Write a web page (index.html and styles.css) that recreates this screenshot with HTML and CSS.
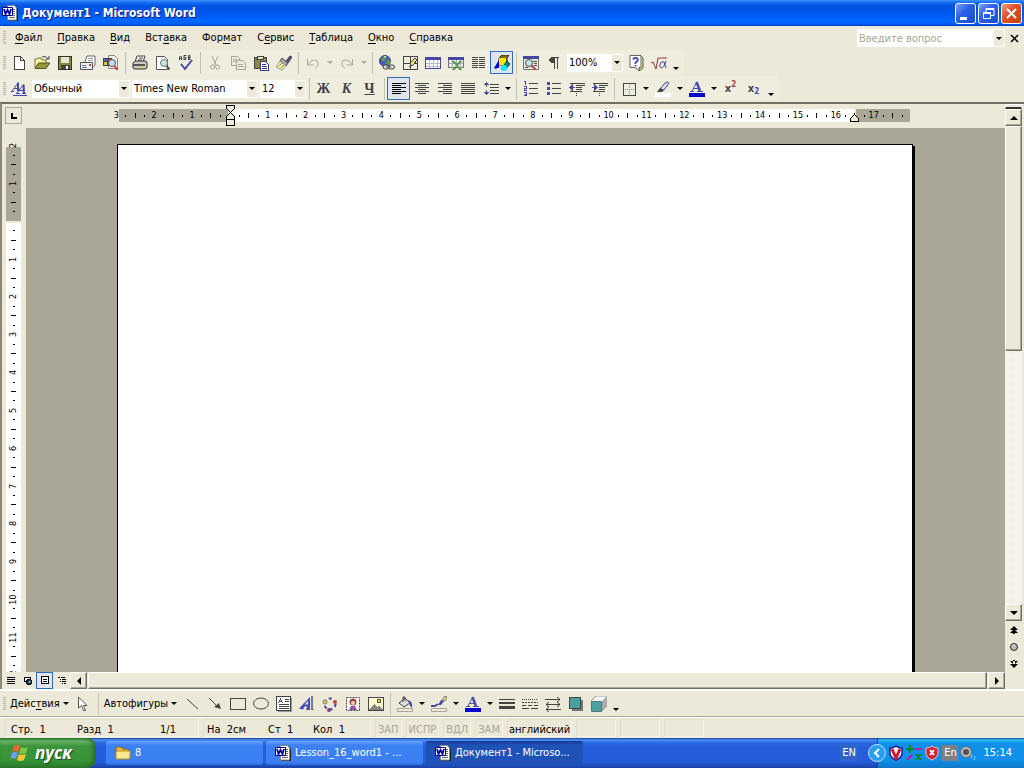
FILE: index.html
```html
<!DOCTYPE html>
<html lang="ru">
<head>
<meta charset="utf-8">
<title>Документ1 - Microsoft Word</title>
<link rel="stylesheet" href="styles.css">
</head>
<body>
<svg class="defs" aria-hidden="true">
  <symbol id="word" viewBox="0 0 16 16"><path d="M6 1h8l2 3v12H6z" fill="#222"/><path d="M5.500 .5h7l2 2.500v12h-9z" fill="#fff" stroke="#888"/><path d="M11 4.500h2M11 6.500h2M11 8.500h2M11 10.500h2M7 12.500h6" stroke="#667"/><path d="M.5 2.500h10v8H.5z" fill="#fff" stroke="#000080"/><path d="M2 4l1.500 5 2-4 2 4L9 4" fill="none" stroke="#0000a0" stroke-width="1.800"/></symbol>
  <symbol id="fontcolor" viewBox="0 0 16 16"><path d="M0 12h16v4H0z" fill="#0000c8"/><path d="M1 10.500h4M8 10.500h6M3 10L7.500 1.500M4.500 7.500h6" stroke="#4a4aa8" fill="none"/><path d="M7.500 1L11 10" stroke="#4a4aa8" stroke-width="2.500"/></symbol>
</svg>
<div class="window">
  <header class="titlebar">
    <svg class="i"><use href="#word"/></svg>
    <h1>Документ1 - Microsoft Word</h1>
    <button class="cap" aria-label="Свернуть"><svg viewBox="0 0 19 19"><path d="M4 13h7v3H4z" fill="#fff"/></svg></button>
    <button class="cap" aria-label="Восстановить"><svg viewBox="0 0 19 19"><path d="M7 8V4.500h8v7h-3M4.500 8.500h7v6h-7z" fill="none" stroke="#fff"/><path d="M7 4h8v2H7zM4 8h8v2H4z" fill="#fff"/></svg></button>
    <button class="cap close" aria-label="Закрыть"><svg viewBox="0 0 19 19"><path d="M5 5l9 9M14 5l-9 9" stroke="#fff" stroke-width="2"/></svg></button>
  </header>

  <nav class="menubar">
    <span class="grip"></span>
    <button><u>Ф</u>айл</button><button><u>П</u>равка</button><button><u>В</u>ид</button><button>Вст<u>а</u>вка</button><button>Фор<u>м</u>ат</button><button>С<u>е</u>рвис</button><button><u>Т</u>аблица</button><button><u>О</u>кно</button><button><u>С</u>правка</button>
    <div class="combo ask"><input type="text" placeholder="Введите вопрос" aria-label="Введите вопрос"></div>
    <button class="docclose" aria-label="Закрыть документ"><svg viewBox="0 0 9 9"><path d="M1 1l7 7M8 1L1 8" stroke="#000" stroke-width="1.500"/></svg></button>
  </nav>

  <div class="toolbar">
    <span class="grip"></span>
    <button class="tb" aria-label="Создать"><svg class="i px" viewBox="0 0 16 16"><path d="M3.500 1.500h6l4 4v9h-10z" fill="#fff" stroke="#444"/><path d="M9.500 1.500v4h4" fill="none" stroke="#444"/></svg></button>
    <button class="tb" aria-label="Открыть"><svg class="i" viewBox="0 0 16 16"><path d="M1 13V4h2l1-1h3l1 2h4v3" fill="#f6f3a0" stroke="#77773a"/><path d="M1 13.500L4.500 8H16l-4 5.500z" fill="#99953e" stroke="#555520"/><path d="M8 2q4-2 6 2M12 4h3V1" fill="none" stroke="#444"/></svg></button>
    <button class="tb" aria-label="Сохранить"><svg class="i px" viewBox="0 0 16 16"><path d="M1.500 1.500h13v13h-13z" fill="#85853a" stroke="#333"/><path d="M4 2h8v6H4z" fill="#e6e5d8"/><path d="M4 10h9v4H4z" fill="#444"/><path d="M9 11h2v3H9z" fill="#fff"/></svg></button>
    <button class="tb" aria-label="Сообщение"><svg class="i" viewBox="0 0 16 16"><path d="M5 7l2-6h8v9l-2 2" fill="#fff" stroke="#666"/><path d="M8 3.500h5M8 5.500h5" stroke="#999"/><path d="M.5 7.500h12v7H.5z" fill="#f4f4f4" stroke="#555"/><path d="M2 10.500h4M2 12.500h5" stroke="#66b"/><path d="M9 9h2v2H9z" fill="#b44"/></svg></button>
    <button class="tb" aria-label="Найти файл"><svg class="i" viewBox="0 0 16 16"><path d="M5.500 .5h6l3 3v10h-9z" fill="#eee" stroke="#888"/><path d="M0 3h9v8H0z" fill="#444"/><path d="M1 4h3v2H1z" fill="#4a6ad0"/><path d="M5 4h3v2H5z" fill="#c34"/><path d="M1 7h3v3H1z" fill="#d8c830"/><circle cx="9" cy="8" r="3.500" fill="#bfe3e8" stroke="#555"/><path d="M11.500 11l3 4" stroke="#d33" stroke-width="2"/></svg></button>
    <span class="sep"></span>
    <button class="tb" aria-label="Печать"><svg class="i" viewBox="0 0 16 16"><path d="M5 1h8l-2 6H3z" fill="#fff" stroke="#444"/><path d="M7 3h4M6 5h4" stroke="#444"/><path d="M1 8l2-2h11l1 2v5l-2 1H3l-2-1z" fill="#c8c8c0" stroke="#333"/><path d="M1 9h12v2H1z" fill="#555"/><path d="M9 12h2" stroke="#dd3" stroke-width="2"/></svg></button>
    <button class="tb" aria-label="Просмотр"><svg class="i" viewBox="0 0 16 16"><path d="M1.500 1.500h8l3 3v10h-11z" fill="#fff" stroke="#555"/><circle cx="9" cy="8" r="3.500" fill="#c5e2e6" stroke="#777"/><path d="M11.500 11l3 3.500" stroke="#555" stroke-width="2"/></svg></button>
    <button class="tb" aria-label="Орфография"><svg class="i" viewBox="0 0 16 16"><path d="M1.500 5V2l1-1 1 1v3M2 3.500h1M6 5V.5h2.500M6 2.500h2v2H5.500M10.500 5V.5H12v2h-1.500M12 2.500v2h-2" stroke="#444" fill="none"/><path d="M3 9l4 5 7-9" fill="none" stroke="#4848aa" stroke-width="2"/></svg></button>
    <span class="sep"></span>
    <button class="tb" aria-label="Вырезать"><svg class="i" viewBox="0 0 16 16"><path d="M5 1l4 9M11 1L7 10" stroke="#aaa796" fill="none"/><circle cx="5.500" cy="12" r="2" fill="none" stroke="#aaa796"/><circle cx="10.500" cy="12" r="2" fill="none" stroke="#aaa796"/></svg></button>
    <button class="tb" aria-label="Копировать"><svg class="i px" viewBox="0 0 16 16"><g fill="#eeebdf" stroke="#aaa796"><path d="M1.500 1.500h6l2 2v7h-8z"/><path d="M6.500 5.500h6l3 3v6h-9z"/><path d="M3 4.500h4M3 6.500h3M8 9.500h5M8 11.500h6"/></g></svg></button>
    <button class="tb" aria-label="Вставить"><svg class="i px" viewBox="0 0 16 16"><path d="M1.500 2.500h12v11h-12z" fill="#8d8843" stroke="#444"/><path d="M5 1h5v3H4z" fill="#ddd" stroke="#444"/><path d="M7.500 6.500h5l3 3v6h-8z" fill="#fff" stroke="#3d3d90"/><path d="M9 9.500h4M9 11.500h5M9 13.500h5" stroke="#3d3d90"/></svg></button>
    <button class="tb" aria-label="Формат по образцу"><svg class="i" viewBox="0 0 16 16"><path d="M10 6l4-5 2 1-4 6z" fill="#557" stroke="#444"/><path d="M6 3l6 5-2 3-6-5z" fill="#aaa" stroke="#444"/><path d="M4 6l6 5-4 4-6-3z" fill="#f5f0a0" stroke="#999"/><path d="M3 11l3-3M5 13l3-3" stroke="#887"/></svg></button>
    <span class="sep"></span>
    <button class="tb" aria-label="Отменить"><svg class="i" viewBox="0 0 16 16"><path d="M2.500 4v6h6M3 9.500q4-6 9-4 3 4-2 8" fill="none" stroke="#aaa796"/></svg></button><button class="drop off" aria-label="Список отмены"></button>
    <button class="tb" aria-label="Вернуть"><svg class="i" viewBox="0 0 16 16"><path d="M13.500 4v6h-6M13 9.500Q9 3.500 4 5.500q-3 4 2 8" fill="none" stroke="#aaa796"/></svg></button><button class="drop off" aria-label="Список возврата"></button>
    <span class="sep"></span>
    <button class="tb" aria-label="Гиперссылка"><svg class="i" viewBox="0 0 16 16"><circle cx="6" cy="6" r="5.500" fill="#4a5ac8" stroke="#446"/><path d="M2 4l3-3 3 1-2 3-2 2zM6 8l4-4 2 3-3 3z" fill="#5aa04c"/><path d="M5 1l2 0-1 2z" fill="#fff"/><rect x="4" y="10" width="6" height="4" rx="2" fill="#ddd" stroke="#444"/><rect x="9.500" y="10" width="6" height="4" rx="2" fill="#ddd" stroke="#444"/><path d="M7 12h5" stroke="#444"/></svg></button>
    <button class="tb" aria-label="Таблицы и границы"><svg class="i px" viewBox="0 0 16 16"><path d="M1.500 1.500h14v13h-14zM8.500 1v13M1 8.500h14" fill="none" stroke="#444"/><path d="M8 11l1-4 4-4 2 2-4 5z" fill="#efe77c" stroke="#444"/></svg></button>
    <button class="tb" aria-label="Добавить таблицу"><svg class="i px" viewBox="0 0 16 16"><path d="M.5 2.500h15v11H.5z" fill="#fff" stroke="#4848a0"/><path d="M0 2h16v3H0z" fill="#4848a0"/><path d="M4.500 5v8M8.500 5v8M12.500 5v8M1 8.500h14M1 11.500h14" stroke="#bbb"/></svg></button>
    <button class="tb" aria-label="Таблица Excel"><svg class="i px" viewBox="0 0 16 16"><path d="M.5 2.500h15v10H.5z" fill="#eee" stroke="#777"/><path d="M0 2h16v3H0z" fill="#4848a0"/><path d="M4.500 5v8M8.500 5v8M12.500 5v8M1 8.500h14" stroke="#aaa"/><path d="M5 6l8 9M13 6l-8 9" stroke="#5d9a5d" stroke-width="2"/></svg></button>
    <button class="tb" aria-label="Колонки"><svg class="i px" viewBox="0 0 16 16"><path d="M1 2.500h6M1 4.500h6M1 6.500h6M1 8.500h6M1 10.500h6M1 12.500h6M8 2.500h6M8 4.500h6M8 6.500h6M8 8.500h6M8 10.500h6M8 12.500h6" stroke="#444"/></svg></button>
    <button class="tb on" aria-label="Рисование"><svg class="i" viewBox="0 0 16 16"><path d="M5 3l3-3h7l-2 3v7H5z" fill="#7a6c00" stroke="#332b00"/><path d="M5 3h7v7H5z" fill="#ffe800"/><path d="M0 13l5-8v8H3l-1 1z" fill="#0000d0"/><path d="M7 14l6-8 3 3-5 6z" fill="#138080" stroke="#044"/><circle cx="10" cy="13" r="3" fill="#00eeff"/></svg></button>
    <span class="sep"></span>
    <button class="tb" aria-label="Схема документа"><svg class="i" viewBox="0 0 16 16"><path d="M.5 1.500h15v13H.5z" fill="#e8e6da" stroke="#777"/><path d="M0 1h16v3H0z" fill="#4848a0"/><path d="M10 6.500h4M11 8.500h3M11 10.500h3M2 12.500h3" stroke="#555"/><circle cx="6" cy="8" r="3.500" fill="#c0e3e8" stroke="#555"/><path d="M8.500 10.500l4 4" stroke="#b44" stroke-width="2"/></svg></button>
    <button class="tb" aria-label="Непечатаемые знаки"><svg class="i px" viewBox="0 0 16 16"><path d="M8 2Q3 2 3 5t5 3z" fill="#444"/><path d="M6 2.500h7M8.500 2v12M11.500 2v12" stroke="#444"/></svg></button>
    <label class="combo zoom"><select aria-label="Масштаб"><option>100%</option></select></label>
    <button class="tb" aria-label="Справка"><svg class="i" viewBox="0 0 16 16"><path d="M11 13v3l4-3V3l-2-2" fill="#f0e980" stroke="#555"/><path d="M2 .5h11v12h-2v3l-4-3H2z" fill="#fff" stroke="#666"/><path d="M5 4.500Q5.500 3 7.500 3t2.500 1.500Q10 6 7.500 7.500V9M7.500 10v1.500" fill="none" stroke="#4444aa" stroke-width="1.800"/></svg></button>
    <button class="tb" aria-label="Формула"><svg class="i" viewBox="0 0 16 16"><path d="M0 8l2-1 3 7 2-11h9" fill="none" stroke="#943b3b"/><path d="M15 6q-2 7-5 7-2-1-1-4 1-3 4-2l2 6" fill="none" stroke="#4444a0"/></svg></button>
    <button class="drop more" aria-label="Другие кнопки"></button>
  </div>

  <div class="toolbar">
    <span class="grip"></span>
    <button class="tb" aria-label="Стили"><svg class="i" viewBox="0 0 16 16"><path d="M0 10.500h3M1 10L7 2M3 7.500h4M5 12.500h4M6 12l6-8M8 9.500h5M11 12.500h4" fill="none" stroke="#4343b0"/><path d="M7 1.500V10M12.500 3.500l.5 9" stroke="#4343b0" stroke-width="2"/><path d="M2 14.500h14" stroke="#4343b0"/></svg></button>
    <label class="combo style"><select aria-label="Стиль"><option>Обычный</option></select></label>
    <label class="combo face"><select aria-label="Шрифт"><option>Times New Roman</option></select></label>
    <label class="combo size"><select aria-label="Размер"><option>12</option></select></label>
    <span class="sep"></span>
    <button class="tb letter bold">Ж</button><button class="tb letter ital">К</button><button class="tb letter und">Ч</button>
    <span class="sep"></span>
    <button class="tb on" aria-label="По левому краю"><svg class="i px" viewBox="0 0 16 16"><path d="M1 2.500h14M1 4.500h9M1 6.500h14M1 8.500h9M1 10.500h14M1 12.500h9" stroke="#000"/></svg></button>
    <button class="tb" aria-label="По центру"><svg class="i px" viewBox="0 0 16 16"><path d="M1 2.500h14M4 4.500h8M1 6.500h14M4 8.500h8M1 10.500h14M4 12.500h8" stroke="#444"/></svg></button>
    <button class="tb" aria-label="По правому краю"><svg class="i px" viewBox="0 0 16 16"><path d="M1 2.500h14M6 4.500h9M1 6.500h14M6 8.500h9M1 10.500h14M6 12.500h9" stroke="#444"/></svg></button>
    <button class="tb" aria-label="По ширине"><svg class="i px" viewBox="0 0 16 16"><path d="M1 2.500h14M1 4.500h14M1 6.500h14M1 8.500h14M1 10.500h14M1 12.500h14" stroke="#444"/></svg></button>
    <button class="tb" aria-label="Интервал"><svg class="i px" viewBox="0 0 16 16"><path d="M7 3.500h9M7 6.500h9M7 9.500h9M7 12.500h9" stroke="#444"/><path d="M3.500 2v4M3.500 9v4" stroke="#4848a8"/><path d="M1 4l2.500-3L6 4zM1 11l2.500 3L6 11z" fill="#4848a8"/></svg></button><button class="drop" aria-label="Выбор интервала"></button>
    <span class="sep"></span>
    <button class="tb" aria-label="Нумерация"><svg class="i px" viewBox="0 0 16 16"><path d="M6 2.500h9M6 7.500h9M6 12.500h9" stroke="#444"/><path d="M1 .5h1.500V4M1 5.500h2v2H1v2h3M1 11.500h2v3H1M2 13.500h1" stroke="#4848a8" fill="none"/></svg></button>
    <button class="tb" aria-label="Маркеры"><svg class="i px" viewBox="0 0 16 16"><path d="M6 2.500h9M6 7.500h9M6 12.500h9" stroke="#444"/><path d="M1 1h3v3H1zM1 6h3v3H1zM1 11h3v3H1z" fill="#4848a8"/></svg></button>
    <button class="tb" aria-label="Уменьшить отступ"><svg class="i px" viewBox="0 0 16 16"><path d="M1 2.500h15M7 4.500h9M7 6.500h6M7 8.500h6M1 10.500h12" stroke="#444"/><path d="M7.500 1.500v14" stroke="#444" stroke-dasharray="1 1"/><path d="M4 3v7L0 6.500z" fill="#4848a8"/><path d="M2 6.500h4" stroke="#4848a8"/></svg></button>
    <button class="tb" aria-label="Увеличить отступ"><svg class="i px" viewBox="0 0 16 16"><path d="M1 2.500h15M7 4.500h9M7 6.500h6M7 8.500h6M1 10.500h12" stroke="#444"/><path d="M7.500 1.500v14" stroke="#444" stroke-dasharray="1 1"/><path d="M2 3v7l4-3.500z" fill="#4848a8"/><path d="M0 6.500h4" stroke="#4848a8"/></svg></button>
    <span class="sep"></span>
    <button class="tb" aria-label="Границы"><svg class="i px" viewBox="0 0 16 16"><path d="M2.500 2.500h12v12h-12z" fill="none" stroke="#444"/><path d="M8.500 4v10M4 8.500h10" stroke="#888" stroke-dasharray="1 1"/></svg></button><button class="drop" aria-label="Вид границ"></button>
    <button class="tb" aria-label="Выделение"><svg class="i" viewBox="0 0 16 16"><path d="M0 12h16v4H0z" fill="#fff"/><path d="M5 8l5-6q3-2 4 0l-5 7z" fill="#ddd" stroke="#4848a0"/><path d="M5 7l4 2-2 2H2z" fill="#444"/></svg></button><button class="drop" aria-label="Цвет выделения"></button>
    <button class="tb" aria-label="Цвет шрифта"><svg class="i"><use href="#fontcolor"/></svg></button><button class="drop" aria-label="Выбор цвета шрифта"></button>
    <button class="tb script">x<sup>2</sup></button><button class="tb script">x<sub>2</sub></button>
    <button class="drop more" aria-label="Другие кнопки"></button>
  </div>

  <main class="workspace">
    <div class="corner"><button class="tab" aria-label="Табуляция"><svg viewBox="0 0 9 9" class="px"><path d="M2 2h2v4h4v2H2z" fill="#000"/></svg></button></div>
    <div class="hruler">
      <div class="scale" data-from="-12" data-to="71">
        <svg class="indent px" viewBox="0 0 9 22"><path d="M.5 .5h8v3l-4 4-4-4zM.5 14.500v-3l4-4 4 4v3zM.5 14.500h8v6h-8z" fill="#ece9d8" stroke="#000"/></svg>
        <svg class="rindent px" viewBox="0 0 9 9"><path d="M.5 8.500v-3l4-4 4 4v3z" fill="#ece9d8" stroke="#000"/></svg>
      </div>
    </div>
    <div class="vruler"><div class="scale" data-from="-8" data-to="48"></div></div>
    <div class="canvas"><div class="paper" contenteditable="true" role="textbox" aria-label="Документ"></div></div>
    <div class="vscroll">
      <span class="split"></span>
      <button class="sb" aria-label="Вверх"><span class="tri up"></span></button>
      <div class="track"><div class="thumb"></div></div>
      <button class="sb" aria-label="Вниз"><span class="tri down"></span></button>
      <button class="nav" aria-label="Предыдущая страница"><svg viewBox="0 0 8 8"><path d="M0 4l4-4 4 4zM0 7l4-4 4 4zM3 4h2v4H3z" fill="#000"/></svg></button>
      <button class="nav" aria-label="Объект перехода"><svg viewBox="0 0 8 8"><circle cx="4" cy="4" r="3.500" fill="#bbb" stroke="#222"/><path d="M2 3.500l2-2" stroke="#fff"/></svg></button>
      <button class="nav" aria-label="Следующая страница"><svg viewBox="0 0 8 8"><path d="M0 1l4 4 4-4zM0 4l4 4 4-4zM3 0h2v4H3z" fill="#000"/></svg></button>
    </div>
    <div class="hscroll">
      <button class="view" aria-label="Обычный"><svg class="px" viewBox="0 0 10 9"><path d="M1 1.500h8M1 3.500h8M1 5.500h8M1 7.500h8" stroke="#000"/></svg></button>
      <button class="view" aria-label="Веб-документ"><svg viewBox="0 0 10 9" class="px"><path d="M1.500 1.500h6v4h-6z" fill="#fff" stroke="#000"/><circle cx="6" cy="6" r="2.500" fill="#338" stroke="#000"/><path d="M6 5h2v2H6z" fill="#4a5"/></svg></button>
      <button class="view on" aria-label="Разметка страницы"><svg class="px" viewBox="0 0 10 9"><path d="M1.500 .5h7v7h-7z" fill="#fff" stroke="#000"/><path d="M3 3.500h4M3 5.500h4" stroke="#000"/></svg></button>
      <button class="view" aria-label="Структура"><svg class="px" viewBox="0 0 10 9"><path d="M1 1.500h2M4 1.500h4M3 3.500h1M5 3.500h4M3 5.500h1M5 5.500h4M5 7.500h1M7 7.500h2" stroke="#000"/></svg></button>
      <button class="sb" aria-label="Влево"><span class="tri left"></span></button>
      <div class="thumb"></div>
      <button class="sb" aria-label="Вправо"><span class="tri right"></span></button>
    </div>
  </main>

  <div class="toolbar drawing">
    <span class="grip"></span>
    <button class="txt">Дейс<u>т</u>вия<span class="caret"></span></button>
    <button class="tb" aria-label="Выбор объектов"><svg class="i" viewBox="0 0 16 16"><path d="M3.500 1v11l3-2.500 2 5h2l-2-5h3.500z" fill="#fff" stroke="#555"/></svg></button>
    <span class="sep"></span>
    <button class="txt">Автофи<u>г</u>уры<span class="caret"></span></button>
    <button class="tb" aria-label="Линия"><svg class="i" viewBox="0 0 16 16"><path d="M3 3l11 10" stroke="#444"/></svg></button>
    <button class="tb" aria-label="Стрелка"><svg class="i" viewBox="0 0 16 16"><path d="M2 2l9 9" stroke="#444"/><path d="M14 13l-2-6-5 4z" fill="#444"/></svg></button>
    <button class="tb" aria-label="Прямоугольник"><svg class="i px" viewBox="0 0 16 16"><path d="M.5 2.500h15v11H.5z" fill="none" stroke="#444"/></svg></button>
    <button class="tb" aria-label="Овал"><svg class="i" viewBox="0 0 16 16"><ellipse cx="8" cy="7.500" rx="7.500" ry="5.500" fill="none" stroke="#444"/></svg></button>
    <button class="tb" aria-label="Надпись"><svg class="i px" viewBox="0 0 16 16"><path d="M2 2h14v14H2z" fill="#999"/><path d="M.5 .5h14v14H.5z" fill="#fff" stroke="#444"/><path d="M2.500 7l2-4 2 4M3 5.500h3M9 3.500h4M9 5.500h4M3 8.500h10M3 10.500h10M3 12.500h10" fill="none" stroke="#444"/></svg></button>
    <button class="tb" aria-label="WordArt"><svg class="i" viewBox="0 0 16 16"><path d="M0 12.500L11 1v13H7l1-3-2-1-2 3.500z" fill="#4a4ac0"/><path d="M12 0h2v12l1 2h-3z" fill="#77779c"/><path d="M6 8.500l3-4v4z" fill="#ece9d8"/></svg></button>
    <button class="tb" aria-label="Диаграмма"><svg class="i" viewBox="0 0 16 16"><circle cx="8" cy="8" r="5.500" fill="none" stroke="#4444a0" stroke-width="2" stroke-dasharray="3 3"/><circle cx="3" cy="6" r="2" fill="#e6dc43" stroke="#776"/><circle cx="13" cy="6" r="2" fill="#c34646"/><circle cx="7" cy="14" r="2" fill="#804080"/></svg></button>
    <button class="tb" aria-label="Картинка"><svg class="i" viewBox="0 0 16 16"><path d="M1.500 1.500h13v13h-13z" fill="#fff" stroke="#444" stroke-dasharray="2 1"/><circle cx="8" cy="6" r="3.500" fill="#a34444"/><circle cx="8" cy="7" r="2" fill="#f0c9a5"/><path d="M4 14l2-4h4l2 4z" fill="#9852a2"/></svg></button>
    <button class="tb" aria-label="Рисунок"><svg class="i px" viewBox="0 0 16 16"><path d="M.5 1.500h15v13H.5z" fill="#fffdd0" stroke="#444"/><circle cx="11" cy="5" r="2" fill="#e5d838" stroke="#555"/><path d="M1 14l5-6 3 3 2-1 4 4z" fill="#888"/></svg></button>
    <span class="sep"></span>
    <button class="tb" aria-label="Цвет заливки"><svg class="i" viewBox="0 0 16 16"><path d="M.5 12.500h15v3H.5z" fill="#ece9d8" stroke="#aaa796"/><path d="M2 7l6-5 5 5-6 4z" fill="#ddd" stroke="#444"/><path d="M6 6V1h2v4" fill="none" stroke="#444"/><path d="M11 4q5 1 4 8-2-1-3-5z" fill="#4848a8"/></svg></button><button class="drop" aria-label="Выбор заливки"></button>
    <button class="tb" aria-label="Цвет линий"><svg class="i" viewBox="0 0 16 16"><path d="M.5 12.500h15v3H.5z" fill="#ece9d8" stroke="#aaa796"/><path d="M0 10h4l3-2" stroke="#4848a8" stroke-width="2" fill="none"/><path d="M7 9l3-5 3 1-3 4z" fill="#4848a8"/><path d="M11 4l3-4 2 1-2 4z" fill="#e8dd6a" stroke="#777"/></svg></button><button class="drop" aria-label="Выбор цвета линий"></button>
    <button class="tb" aria-label="Цвет шрифта"><svg class="i"><use href="#fontcolor"/></svg></button><button class="drop" aria-label="Выбор цвета шрифта"></button>
    <button class="tb" aria-label="Тип линии"><svg class="i px" viewBox="0 0 16 16"><path d="M0 3.500h16" stroke="#444"/><path d="M0 7h16" stroke="#444" stroke-width="2"/><path d="M0 11.500h16" stroke="#444" stroke-width="3"/></svg></button>
    <button class="tb" aria-label="Тип штриха"><svg class="i px" viewBox="0 0 16 16"><path d="M0 3.500h16" stroke="#444" stroke-dasharray="1 1"/><path d="M0 6.500h16" stroke="#444" stroke-dasharray="2 1"/><path d="M0 9.500h16" stroke="#444" stroke-dasharray="4 2"/><path d="M0 12.500h16" stroke="#444" stroke-dasharray="7 2"/></svg></button>
    <button class="tb" aria-label="Вид стрелки"><svg class="i" viewBox="0 0 16 16"><path d="M0 3.500h15M12 1l3 2.500L12 6M1 8.500h14M4 6L1 8.500 4 11M12 6l3 2.500-3 2.500M1 13.500h15M4 11l-3 2.500L4 16" fill="none" stroke="#444"/></svg></button>
    <button class="tb" aria-label="Тень"><svg class="i px" viewBox="0 0 16 16"><path d="M4 4h11v11H4z" fill="#777"/><path d="M1.500 1.500h11v11h-11z" fill="#48a0a0" stroke="#444"/></svg></button>
    <button class="tb" aria-label="Объем"><svg class="i" viewBox="0 0 16 16"><path d="M0 5l5-5h11v10l-5 5z" fill="#f6f6f6" stroke="#999"/><path d="M11 5l5-5v10l-5 5z" fill="#aaa"/><path d="M.5 5.500h10v10H.5z" fill="#48a0a0" stroke="#577"/></svg></button>
    <button class="drop more" aria-label="Другие кнопки"></button>
  </div>

  <footer class="status">
    <div class="cell pos"><span>Стр.&nbsp; 1</span><span>Разд&nbsp; 1</span><span>1/1</span></div>
    <div class="cell at"><span>На&nbsp; 2см</span><span>Ст&nbsp; 1</span><span>Кол&nbsp; 1</span></div>
    <div class="cell flag">ЗАП</div><div class="cell flag">ИСПР</div><div class="cell flag">ВДЛ</div><div class="cell flag">ЗАМ</div>
    <div class="cell lang">английский</div><div class="cell blank"></div><div class="cell blank"></div><div class="cell blank"></div>
  </footer>
</div>

<div class="taskbar">
  <button class="start"><svg viewBox="0 0 20 18"><path d="M4 2q3-2 6 0L8 8Q5 6 2 8z" fill="#f0642f"/><path d="M11 3q3 2 7 0l-2 6q-3 2-7 0z" fill="#7fc241"/><path d="M2 9q3-2 6 0l-2 6q-3-2-6 0z" fill="#6e9cf0"/><path d="M9 10q3 2 7 0l-2 6q-3 2-7 0z" fill="#fbc72f"/></svg>пуск</button>
  <button class="task"><svg class="i" viewBox="0 0 16 16"><path d="M1 13V3l1-1h4l2 2h5v9z" fill="#e8b93a" stroke="#8a6914"/><path d="M1 13V7l1-1h13v6l-1 2H2z" fill="#ffe98e" stroke="#b58e26"/></svg>8</button>
  <button class="task"><svg class="i"><use href="#word"/></svg>Lesson_16_word1 - ...</button>
  <button class="task active"><svg class="i"><use href="#word"/></svg>Документ1 - Microso...</button>
  <button class="kbd">EN</button>
  <div class="tray">
    <button class="chev" aria-label="Скрытые значки"><svg viewBox="0 0 18 18"><circle cx="9" cy="9" r="8.500" fill="#2b9df0" stroke="#b9e2ff"/><path d="M11 5L7 9l4 4" fill="none" stroke="#fff" stroke-width="2"/></svg></button>
    <svg class="i" viewBox="0 0 16 16"><path d="M2 3q4 0 6-2 2 2 6 2v6q-1 4-6 6-5-2-6-6z" fill="#fff" stroke="#1c1ca0" stroke-width="1.500"/><path d="M4 4l4 9 4-9" fill="none" stroke="#d01828" stroke-width="3"/></svg>
    <svg class="i px" viewBox="0 0 16 16"><path d="M0 4h8M4 0v8" stroke="#0a8a24" stroke-width="2"/><path d="M9 4h7M1 15l5-5" stroke="#c018a8" stroke-width="2"/><path d="M10 9l5 6M15 9l-5 6" stroke="#0a8a24" stroke-width="2"/></svg>
    <svg class="i" viewBox="0 0 16 16"><path d="M2 3q4 0 6-2 2 2 6 2v6q-1 4-6 6-5-2-6-6z" fill="#d3202c" stroke="#eec0c0"/><path d="M6 5l4 5M10 5l-4 5" stroke="#fff" stroke-width="2"/></svg>
    <span class="lay">En</span>
    <svg class="i" viewBox="0 0 16 16"><circle cx="6" cy="7" r="5.500" fill="#bbb" stroke="#666"/><circle cx="6" cy="7" r="3" fill="#555"/><path d="M11 13l1-4M14 15l1-4" stroke="#8cc8ff" fill="none"/></svg>
    <time>15:14</time>
  </div>
</div>
<script src="ruler.js"></script>
</body>
</html>
```
FILE: styles.css
```css
* { box-sizing: border-box; }
html, body { height: 100%; }
body {
  margin: 0;
  display: flex;
  flex-direction: column;
  overflow: hidden;
  background: #ece9d8;
  color: #000;
  font: 11px/14px "DejaVu Sans Condensed", "DejaVu Sans", sans-serif;
}
button, input, select {
  font: inherit;
  color: inherit;
  border: 0;
  padding: 0;
  margin: 0;
  background: none;
  border-radius: 0;
}
svg { display: block; }
.defs { position: absolute; width: 0; height: 0; }
.i { width: 16px; height: 16px; flex: none; }
.px { shape-rendering: crispEdges; }
.window { flex: 1; min-height: 0; display: flex; flex-direction: column; }

.titlebar {
  height: 26px;
  flex: none;
  display: flex;
  align-items: center;
  gap: 2px;
  padding: 0 2px;
  background: linear-gradient(#3c94ff 0, #1168f0 3px, #0052e0 6px, #0058ee 14px, #0066ff 20px, #0066ff 23px, #0040c8 26px);
}
.titlebar h1 {
  flex: 1;
  margin: 0 0 0 2px;
  color: #fff;
  font: bold 12px/16px "DejaVu Sans Condensed", sans-serif;
  text-shadow: 1px 1px #0a1883;
}
.cap {
  width: 21px;
  height: 21px;
  border: 1px solid #fff;
  border-radius: 3px;
  background: linear-gradient(135deg, #7ea4f4, #2d62e4 40%, #1a4ad8);
}
.cap.close { background: linear-gradient(135deg, #f0a080, #e0532c 40%, #c83c10); }

.menubar { height: 24px; flex: none; display: flex; align-items: center; gap: 1px; padding: 0 5px 0 3px; }
.menubar > button { padding: 0 7px; }
.menubar .docclose { width: 9px; padding: 0; margin-left: 4px; }
.docclose svg { width: 9px; height: 9px; }
.grip {
  width: 3px;
  height: 14px;
  flex: none;
  margin-right: 1px;
  background: repeating-linear-gradient(#b9b6a6 0 1px, #ece9d8 1px 2px);
}
u { text-underline-offset: 2px; }

.toolbar {
  height: 26px;
  flex: none;
  align-self: flex-start;
  display: flex;
  align-items: center;
  padding: 0 3px;
  background: #efedde;
  border-bottom: 1px solid #ece9d8;
  border-radius: 2px;
}
.tb {
  width: 23px;
  height: 23px;
  flex: none;
  display: flex;
  align-items: center;
  justify-content: center;
}
.on { border: 1px solid #316ac5; background: #dfe5ea; }
.sep { width: 1px; height: 22px; flex: none; margin: 0 2px 0 3px; background: #c5c2b4; }
.drop { width: 11px; height: 22px; flex: none; display: flex; align-items: center; justify-content: center; }
.drop::before, .caret, .combo::after, .tri {
  content: "";
  width: 0;
  height: 0;
  border: 3px solid transparent;
  border-top-color: #000;
  border-bottom: 0;
}
.drop.off::before { border-top-color: #aaa796; }
.drop.more { align-items: flex-end; padding-bottom: 4px; }
.caret { display: inline-block; margin: 0 0 2px 3px; }
.txt { padding: 0 3px; white-space: nowrap; }

.combo {
  height: 18px;
  flex: none;
  display: flex;
  align-items: center;
  background: linear-gradient(#ece9d8, #ece9d8) right 1px center / 10px 16px no-repeat #fff;
  padding-right: 3px;
}
.combo select, .combo input { flex: 1; width: 0; min-width: 0; height: 16px; padding: 0 2px; appearance: none; outline: 0; }
.combo input::placeholder { color: #aaa796; opacity: 1; }
.style { width: 98px; margin: 0 2px; }
.face { width: 126px; margin-right: 2px; }
.size { width: 46px; }
.zoom { width: 56px; margin: 0 1px 0 2px; }
.ask { width: 148px; margin-left: auto; }

.letter { color: #444; font: bold 14px/16px "Liberation Serif", serif; }
.ital { font-style: italic; }
.und { text-decoration: underline; }
.script { color: #444; font-weight: bold; line-height: 12px; }
.script sup, .script sub { font-size: 8px; line-height: 8px; }
.script sup { color: #a84848; align-self: flex-start; margin-top: 4px; }
.script sub { color: #4848a8; align-self: flex-end; margin-bottom: 4px; }

.workspace {
  flex: 1;
  min-height: 0;
  display: grid;
  grid-template: 24px minmax(0, 1fr) 17px / 24px minmax(0, 1fr) 19px;
  border-top: 2px solid #716f64;
  border-left: 2px solid #8c897b;
  background: #ece9d8;
}
.corner { padding: 3px; }
.tab { width: 17px; height: 17px; border: 1px solid #aaa796; display: flex; align-items: center; justify-content: center; }
.tab svg { width: 9px; height: 9px; }
.hruler {
  display: flex;
  justify-content: center;
  align-items: flex-start;
  padding: 5px 10px 0 0;
  font-size: 9px;
  line-height: 13px;
}
.scale { position: relative; flex: none; display: flex; }
.hruler .scale {
  width: 798px;
  height: 13px;
  padding-right: 3px;
  background:
    linear-gradient(#aaa796, #aaa796) 7px 0 / 109px 100% no-repeat,
    linear-gradient(#fff, #fff) 118px 0 / 624px 100% no-repeat,
    linear-gradient(#aaa796, #aaa796) 744px 0 / 54px 100% no-repeat;
}
.mark { flex: 1; min-width: 0; min-height: 0; display: flex; align-items: center; justify-content: center; }
.dot::before { content: ""; flex: none; width: 2px; height: 1px; background: #000; }
.hruler .dot::before { width: 1px; height: 2px; }
.bar::before { content: ""; flex: none; width: 1px; height: 5px; background: #000; }
.indent { position: absolute; left: 114px; top: -4px; width: 9px; height: 22px; }
.rindent { position: absolute; left: 738px; top: 4px; width: 9px; height: 9px; }
.vruler { overflow: hidden; padding: 13px 5px 0 4px; font-size: 9px; line-height: 15px; }
.vruler .scale {
  flex-direction: column;
  height: 539px;
  background: linear-gradient(transparent 6px, #aaa796 6px 80px, #ece9d8 80px 82px, #fff 82px);
}
.vruler .num span { transform: rotate(-90deg); }
.vruler .bar::before { width: 5px; height: 1px; }

.canvas { display: flex; justify-content: center; padding: 16px 2px 0 0; overflow: hidden; background: #aaa796; }
.paper {
  width: 796px;
  height: 1123px;
  flex: none;
  border: 1px solid #000;
  box-shadow: 2px 2px #000;
  background: #fff;
  outline: 0;
}
.vscroll { grid-area: 1 / 3 / 4 / 4; display: flex; flex-direction: column; padding: 0 2px 17px 0; }
.split { height: 5px; flex: none; border: 1px solid #fff; border-bottom: 2px solid #333; }
.sb, .thumb {
  border: 1px solid;
  border-color: #fff #716f64 #716f64 #fff;
  box-shadow: inset -1px -1px #aca899;
  background: #ece9d8;
}
.sb { width: 17px; height: 17px; flex: none; display: flex; align-items: center; justify-content: center; }
.tri { border-width: 4px; border-bottom: 0; }
.up { transform: rotate(180deg); }
.left { transform: rotate(90deg); }
.right { transform: rotate(-90deg); }
.track { flex: 1; background: repeating-conic-gradient(#fff 0 25%, #ece9d8 0 50%) 0 0 / 2px 2px; }
.track .thumb { height: 47%; }
.nav { height: 17px; flex: none; display: flex; align-items: center; justify-content: center; }
.nav svg { width: 8px; height: 8px; }
.hscroll { grid-area: 3 / 1 / 4 / 3; display: flex; }
.hscroll .thumb { flex: 1; height: 17px; margin: 0 1px; }
.view { width: 17px; height: 17px; flex: none; display: flex; align-items: center; justify-content: center; }
.view svg { width: 10px; height: 9px; }

.drawing { align-self: stretch; height: 28px; border-top: 2px solid #fff; border-bottom: 1px solid #aca899; border-radius: 0; background: #ece9d8; }

.status { height: 21px; flex: none; display: flex; gap: 4px; padding: 1px 5px; border-top: 1px solid #fff; }
.cell { border: 1px solid #e2dfcf; border-right-color: #f5f3e8; border-bottom-color: #f5f3e8; padding: 0 3px; line-height: 19px; white-space: nowrap; }
.pos { width: 194px; display: grid; grid-template-columns: 66px 83px 1fr; padding-left: 5px; }
.at { width: 168px; display: grid; grid-template-columns: 61px 45px 1fr; }
.flag { color: #aaa796; padding: 0 2px; }
.lang { padding: 0 1px; }
.blank { width: 40px; }

.taskbar {
  height: 30px;
  flex: none;
  display: flex;
  align-items: center;
  gap: 3px;
  color: #fff;
  background: linear-gradient(#1941a5 0, #4a90f0 2px, #2a66e0 5px, #245edb 10px, #245edb 24px, #1941a5);
}
.start {
  width: 96px;
  height: 30px;
  display: flex;
  align-items: center;
  gap: 5px;
  padding: 0 0 0 10px;
  margin-right: 7px;
  border-radius: 0 9px 9px 0;
  background: linear-gradient(#2c7a2c 0, #6cb86a 3px, #3c943c 8px, #389438 22px, #2a7a2a);
  box-shadow: inset -3px 0 4px #2a6e2a;
  font: italic bold 17px/22px "Open Sans", sans-serif;
  text-shadow: 1px 1px 1px #244a20;
}
.start svg { width: 20px; height: 18px; }
.task {
  flex: 0 1 157px;
  min-width: 0;
  height: 24px;
  display: flex;
  align-items: center;
  gap: 4px;
  padding: 0 9px;
  border-radius: 2px;
  white-space: nowrap;
  overflow: hidden;
  background: linear-gradient(#6ba4fa, #3c81f3 4px, #3c81f3 20px, #2f6fe0);
}
.task.active { background: linear-gradient(#143b94, #1e52b7 4px, #1e52b7); }
.kbd { width: 17px; height: 16px; margin-left: auto; background: #2f65c5; }
.tray {
  height: 30px;
  display: flex;
  align-items: center;
  gap: 2px;
  margin-left: 17px;
  padding-right: 12px;
  border-left: 1px solid #0a4a9a;
  background: linear-gradient(#0a50a5, #2cc0f8 2px, #1290e8 5px, #0f8fea 22px, #1078c8);
}
.chev { width: 18px; margin-left: -10px; }
.lay { width: 16px; height: 16px; line-height: 16px; background: #808080; text-align: center; }
.tray time { margin-left: 5px; }
```
FILE: ruler.js
```js
// Fills each ruler with quarter-centimetre marks: a number, a bar at the half, dots between.
document.querySelectorAll(".scale").forEach(function (scale) {
  var to = Number(scale.dataset.to);
  for (var k = Number(scale.dataset.from); k <= to; k++) {
    var mark = document.createElement("span");
    if (k % 4 === 0) {
      mark.className = "mark num";
      if (k !== 0) {
        var label = document.createElement("span");
        label.textContent = Math.abs(k / 4);
        mark.appendChild(label);
      }
    } else {
      mark.className = k % 2 === 0 ? "mark bar" : "mark dot";
    }
    scale.appendChild(mark);
  }
});
```
